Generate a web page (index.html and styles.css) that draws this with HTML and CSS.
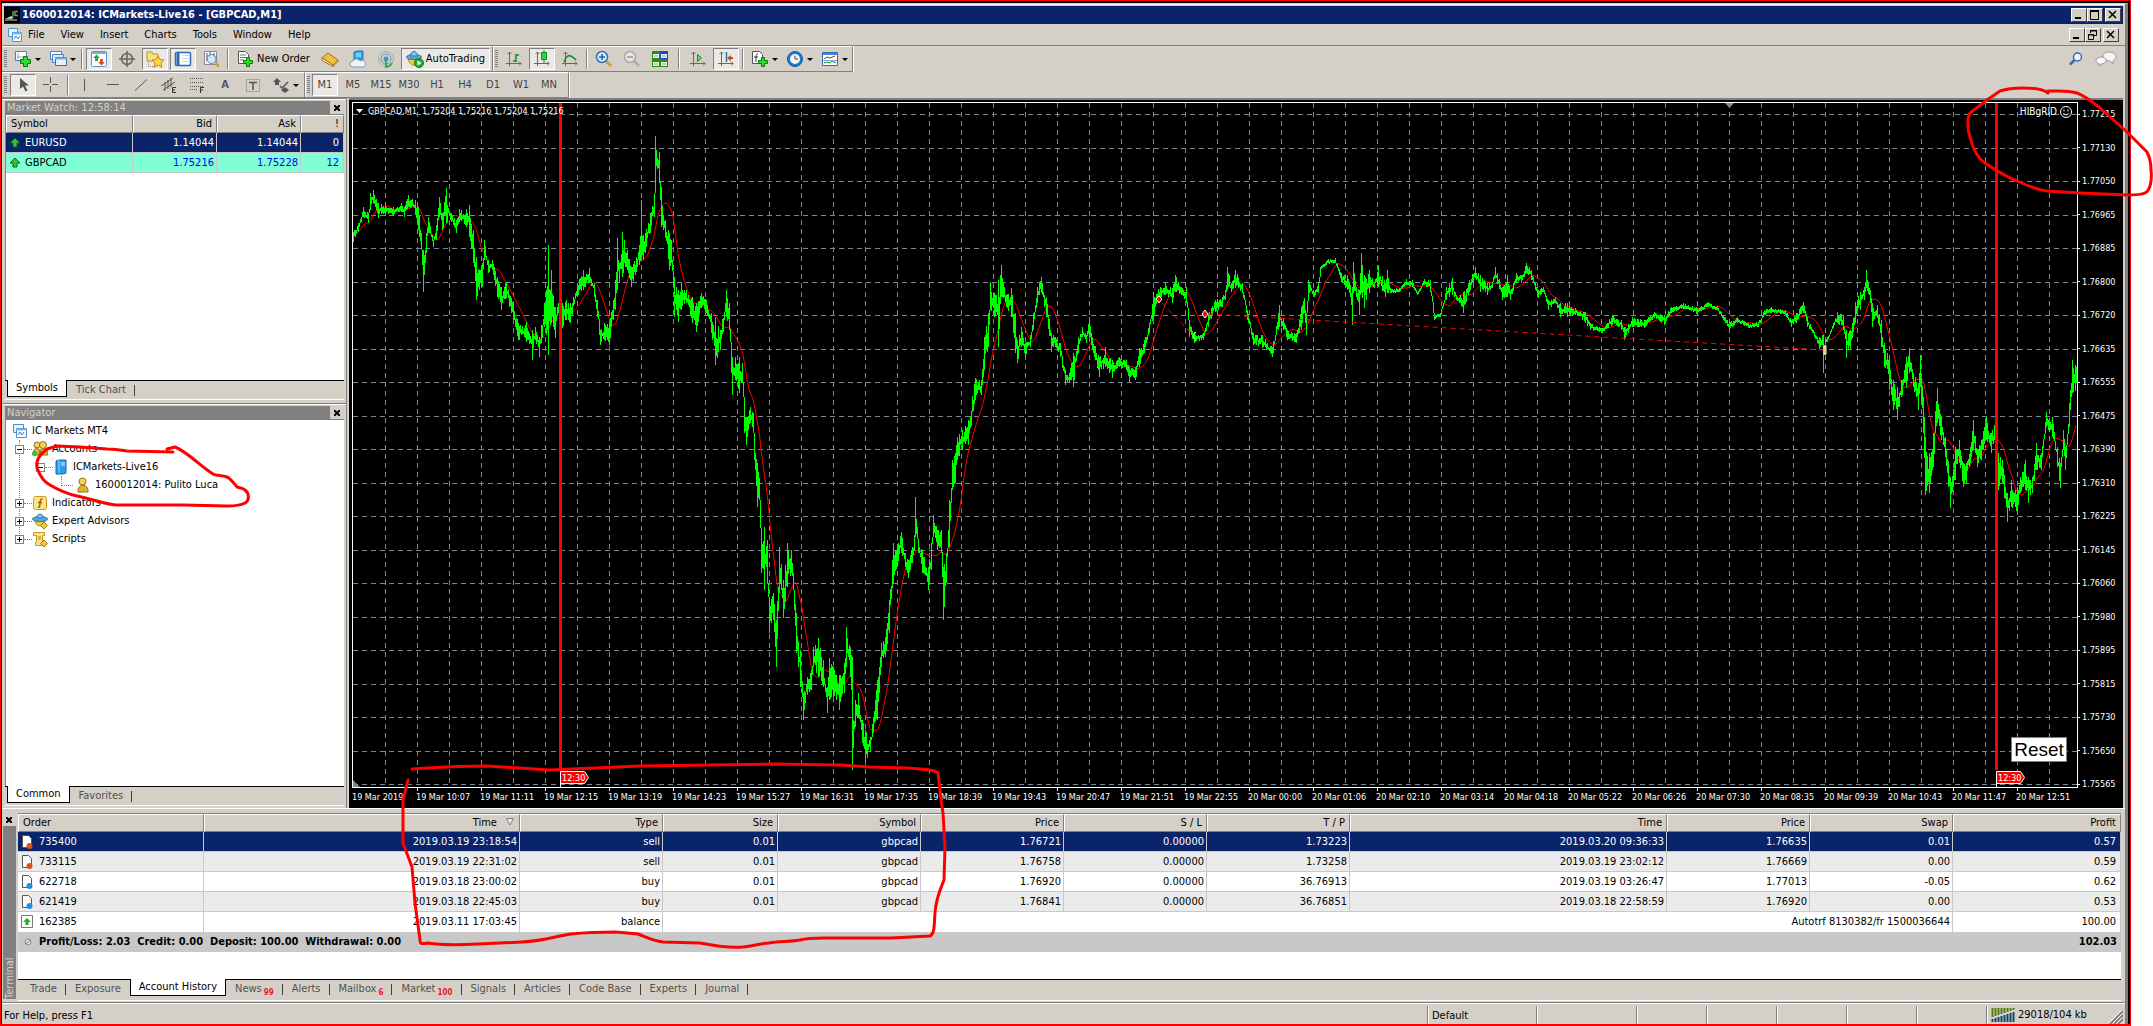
FILE: index.html
```html
<!DOCTYPE html>
<html lang="en">
<head>
    <meta charset="UTF-8">
    <meta name="viewport" content="width=device-width, initial-scale=1.0">
    <title>1600012014: ICMarkets-Live16 - [GBPCAD,M1]</title>
    <link rel="stylesheet" href="styles.css">
</head>
<body>
<div class="desktop">
<div class="window">

    <!-- Title bar -->
    <header class="titlebar">
        <svg class="app-icon" width="16" height="16" viewBox="0 0 16 16"><rect width="16" height="16" fill="#000"/><path d="M1 12l6-3 3 1-2 2z" fill="#b8c8b0"/><path d="M9 4v5M14 4.500h-3v4h3" fill="none" stroke="#6a9a60" stroke-width="1.500"/><path d="M1 13h12" stroke="#ddd"/></svg>
        <h1>1600012014: ICMarkets-Live16 - [GBPCAD,M1]</h1>
        <div class="window-buttons">
            <button type="button" aria-label="Minimize"><svg width="12" height="10"><path d="M2 8h6" stroke="#000" stroke-width="2"/></svg></button>
            <button type="button" aria-label="Maximize"><svg width="12" height="10"><path d="M1.500 1v8.500h8V1" fill="none" stroke="#000"/><path d="M1 1h9" stroke="#000" stroke-width="2"/></svg></button>
            <button type="button" class="close" aria-label="Close"><svg width="12" height="10"><path d="M2 1l7 7M9 1l-7 7" stroke="#000" stroke-width="1.500"/></svg></button>
        </div>
    </header>

    <!-- Menu -->
    <nav class="menubar">
        <svg width="16" height="16" viewBox="0 0 16 16"><path d="M1.500 1.500h9v8h-9z" fill="#e8f4ff" stroke="#4a90d0"/><path d="M5.500 5.500h9v9h-9z" fill="#fff" stroke="#4a90d0"/><path d="M5 6.500h10" stroke="#7ab4e8" stroke-width="2"/><path d="M7 12l2-3 2 3 2-3" fill="none" stroke="#3a80c0"/></svg>
        <button type="button">File</button>
        <button type="button">View</button>
        <button type="button">Insert</button>
        <button type="button">Charts</button>
        <button type="button">Tools</button>
        <button type="button">Window</button>
        <button type="button">Help</button>
        <div class="window-buttons">
            <button type="button" aria-label="Minimize chart"><svg width="12" height="10"><path d="M2 8h6" stroke="#000" stroke-width="2"/></svg></button>
            <button type="button" aria-label="Restore chart"><svg width="12" height="10"><path d="M3.500 3V.5h6v5H7M1.500 4.500h5v5h-5zM3 1h7M1 5h6" fill="none" stroke="#000"/></svg></button>
            <button type="button" class="close" aria-label="Close chart"><svg width="12" height="10"><path d="M2 1l7 7M9 1l-7 7" stroke="#000" stroke-width="1.500"/></svg></button>
        </div>
    </nav>

    <!-- Standard toolbar -->
    <div class="toolbar-row">
        <div class="toolbar">
            <i class="grip"></i>
            <button type="button" class="tool drop" aria-label="New chart"><svg width="18" height="18" viewBox="0 0 18 18"><path d="M1.500 1.500h11v9h-11z" fill="#fff" stroke="#4a80c0"/><path d="M4 3v6M3 7h8" stroke="#88a8c8"/><path d="M9.500 6.500h4v3h3v4h-3v3h-4v-3h-3v-4h3z" fill="#2edc2e" stroke="#0a7a0a"/></svg></button>
            <button type="button" class="tool drop" aria-label="Profiles"><svg width="18" height="18" viewBox="0 0 18 18"><path d="M1.500 1.500h11v8h-11z" fill="#fff" stroke="#4a80c0"/><path d="M3.500 4.500h11v8h-11z" fill="#dceaf8" stroke="#4a80c0"/><path d="M6.500 7.500h11v8h-11z" fill="#e8f2fc" stroke="#3070b8"/><path d="M6 8.500h12" stroke="#78aee0" stroke-width="2"/></svg></button>
            <i class="sep"></i>
            <button type="button" class="tool on" aria-label="Market Watch"><svg width="18" height="18" viewBox="0 0 18 18"><rect x="1.500" y="1.500" width="15" height="15" rx="1" fill="#fff" stroke="#5a98d8"/><path d="M2 3h14" stroke="#78aee0" stroke-width="2"/><path d="M6.500 4.500l3.500 3.500H8v3H5V8H3z" fill="#20b030"/><path d="M11.500 15.500L8 12h2V9h3v3h2z" fill="#e05020"/></svg></button>
            <button type="button" class="tool" aria-label="Data Window"><svg width="18" height="18" viewBox="0 0 18 18" fill="none" stroke="#666" stroke-width="1.500"><circle cx="9" cy="9" r="5.500"/><path d="M9 1v16M1 9h16"/></svg></button>
            <button type="button" class="tool on" aria-label="Navigator"><svg width="18" height="18" viewBox="0 0 18 18"><path d="M1 2h5l1 2h5v7H1z" fill="#f8e088" stroke="#c09020"/><path d="M2.500 12v4.500H8" fill="none" stroke="#888" stroke-dasharray="1 1"/><path d="M12 6l2 3.500 4 .5-3 3 1 4.500-4-2.500-4 2.500 1-4.500-3-3 4-.5z" fill="#ffd840" stroke="#c08a10"/></svg></button>
            <button type="button" class="tool on" aria-label="Terminal"><svg width="18" height="18" viewBox="0 0 18 18"><rect x="1.500" y="2.500" width="15" height="13" rx="1" fill="#fff" stroke="#2a6cb8" stroke-width="1.500"/><path d="M4 3v12" stroke="#2a6cb8" stroke-width="3"/><path d="M8 5.500h7M8 8.500h7M8 11.500h7" stroke="#d4d8dc"/></svg></button>
            <button type="button" class="tool" aria-label="Strategy Tester"><svg width="18" height="18" viewBox="0 0 18 18"><path d="M2.500 1.500h12v13h-12z" fill="#f8f8f8" stroke="#889"/><path d="M5 3v8M8 2v6M12 3v6" stroke="#556"/><circle cx="9.500" cy="9" r="4.500" fill="#cfe4f8" fill-opacity=".85" stroke="#5080b0"/><path d="M13 12.500l4 4" stroke="#d8a030" stroke-width="2.500"/></svg></button>
            <i class="sep"></i>
            <button type="button" class="tool wide"><svg width="18" height="18" viewBox="0 0 18 18"><path d="M1.500 1.500h7l3 3v9h-10z" fill="#fff" stroke="#555"/><path d="M3 5h6M3 7.500h6M3 10h4" stroke="#777"/><path d="M9.500 7.500h3v3h3v3h-3v3h-3v-3h-3v-3h3z" fill="#2edc2e" stroke="#0a7a0a"/></svg>New Order</button>
            <button type="button" class="tool" aria-label="MetaEditor"><svg width="18" height="18" viewBox="0 0 18 18"><path d="M1 8l6-5 10 7-5 5z" fill="#f0c040" stroke="#a87010"/><path d="M1 8v2.500l11 6V15zM12 16.500l5-5V10l-5 5z" fill="#fff4d0" stroke="#a87010"/></svg></button>
            <button type="button" class="tool" aria-label="Virtual hosting"><svg width="18" height="18" viewBox="0 0 18 18"><path d="M5 2l3-1h6v9H5z" fill="#30a8f0" stroke="#1878c0"/><path d="M7 4h5M7 6h5" stroke="#c8ecff"/><path d="M4 17a3 3 0 0 1 0-6 4 4 0 0 1 7 0 3 3 0 0 1 4 6z" fill="#eef2fa" stroke="#8898b8"/></svg></button>
            <button type="button" class="tool" aria-label="Signals"><svg width="18" height="18" viewBox="0 0 18 18" fill="none"><circle cx="9" cy="9" r="7.500" stroke="#8ab8a8"/><circle cx="9" cy="9" r="5" stroke="#6a9ac0"/><circle cx="9" cy="9" r="2.500" fill="#4a90d0"/><path d="M9 9v8a8 8 0 0 0 6-4" stroke="#3cae4c" stroke-width="2"/></svg></button>
            <button type="button" class="tool wide on"><svg width="18" height="18" viewBox="0 0 18 18"><path d="M2 9c2 8 11 9 13 0z" fill="#f0c840" stroke="#b08818"/><ellipse cx="8" cy="7" rx="7.500" ry="2.500" fill="#58a8d8" stroke="#2f78a8"/><path d="M4.500 6c0-6 7-6 7 0z" fill="#80c4e8" stroke="#2f78a8"/><circle cx="13" cy="13" r="4.500" fill="#20b030" stroke="#0a7a1a"/><path d="M11.500 10.500v5l4-2.500z" fill="#fff"/></svg>AutoTrading</button>
        </div>
        <div class="toolbar">
            <i class="grip"></i>
            <button type="button" class="tool" aria-label="Bar chart"><svg width="18" height="18" viewBox="0 0 18 18"><path d="M4.500 2v14M1 13.500h15M2.500 4l2-2 2 2M14 11.500l2 2-2 2" fill="none" stroke="#666"/><path d="M11 4v8M11 5h3M8 11h3" stroke="#128a22" stroke-width="1.500"/></svg></button>
            <button type="button" class="tool on" aria-label="Candlesticks"><svg width="18" height="18" viewBox="0 0 18 18"><path d="M4.500 2v14M1 13.500h15M2.500 4l2-2 2 2M14 11.500l2 2-2 2" fill="none" stroke="#666"/><path d="M11 0v13" stroke="#128a22"/><path d="M8.500 2.500h5v7h-5z" fill="#30d840" stroke="#128a22"/></svg></button>
            <button type="button" class="tool" aria-label="Line chart"><svg width="18" height="18" viewBox="0 0 18 18"><path d="M4.500 2v14M1 13.500h15M2.500 4l2-2 2 2M14 11.500l2 2-2 2" fill="none" stroke="#666"/><path d="M3 12c3-8 6-8 12-2" fill="none" stroke="#128a22" stroke-width="1.500"/></svg></button>
            <i class="sep"></i>
            <button type="button" class="tool" aria-label="Zoom in"><svg width="18" height="18" viewBox="0 0 18 18"><path d="M11 11l5 5" stroke="#d0a030" stroke-width="3"/><circle cx="7" cy="7" r="5.500" fill="#d8ecfc" stroke="#3070b8" stroke-width="1.500"/><path d="M7 4v6M4 7h6" stroke="#2060b0" stroke-width="1.500"/></svg></button>
            <button type="button" class="tool" aria-label="Zoom out"><svg width="18" height="18" viewBox="0 0 18 18"><path d="M11 11l5 5" stroke="#b0b0b0" stroke-width="3"/><circle cx="7" cy="7" r="5.500" fill="#e4e4e4" stroke="#a8a8a8" stroke-width="1.500"/><path d="M4 7h6" stroke="#999" stroke-width="1.500"/></svg></button>
            <button type="button" class="tool" aria-label="Tile windows"><svg width="18" height="18" viewBox="0 0 18 18"><path d="M1 1h8v8H1zM9 9h8v8H9z" fill="#2f8a10"/><path d="M9 1h8v8H9z" fill="#1a4cb8"/><path d="M1 9h8v8H1z" fill="#2f8a10"/><path d="M2 4h6v4H2zM10 4h6v4h-6zM2 12h6v4H2zM10 12h6v4h-6z" fill="#e8f0e8"/><path d="M3 6h4M11 6h4M3 14h4M11 14h4" stroke="#8aa"/></svg></button>
            <i class="sep wider"></i>
            <button type="button" class="tool" aria-label="Auto scroll"><svg width="18" height="18" viewBox="0 0 18 18"><path d="M4.500 2v14M1 13.500h15M2.500 4l2-2 2 2M14 11.500l2 2-2 2" fill="none" stroke="#666"/><path d="M8.500 4.500v7l4-3.500z" fill="#60e070" stroke="#128a22"/></svg></button>
            <button type="button" class="tool on" aria-label="Chart shift"><svg width="18" height="18" viewBox="0 0 18 18"><path d="M4.500 2v14M1 13.500h15M2.500 4l2-2 2 2M14 11.500l2 2-2 2" fill="none" stroke="#666"/><path d="M9.500 2v10" stroke="#2070b0" stroke-width="1.500"/><path d="M10 8l4-3v2h2v2h-2v2z" fill="#d04818"/></svg></button>
            <i class="sep"></i>
            <button type="button" class="tool drop" aria-label="Indicators"><svg width="18" height="18" viewBox="0 0 18 18"><path d="M1.500 1.500h7l3 3v9h-10z" fill="#fff" stroke="#555"/><path d="M7 4c-2 0-2 1-2 8M3 7h4" stroke="#333" fill="none"/><path d="M10.500 7.500h3v3h3v3h-3v3h-3v-3h-3v-3h3z" fill="#2edc2e" stroke="#0a7a0a"/></svg></button>
            <button type="button" class="tool drop" aria-label="Periods"><svg width="18" height="18" viewBox="0 0 18 18"><circle cx="9" cy="9" r="7.500" fill="#1f78d0" stroke="#1658a0"/><circle cx="9" cy="9" r="5" fill="#f4f8fc"/><path d="M9 5.500V9h3" fill="none" stroke="#444"/></svg></button>
            <button type="button" class="tool drop" aria-label="Templates"><svg width="18" height="18" viewBox="0 0 18 18"><path d="M1.500 2.500h15v13h-15z" fill="#fff" stroke="#3070b8"/><path d="M2 4h14" stroke="#3a88d8" stroke-width="2"/><path d="M3 9l3-2 3 1 5-2" fill="none" stroke="#b02810"/><path d="M3 13l3-1 3 1 2-2 4 2" fill="none" stroke="#20902a"/><path d="M2 10.500h14" stroke="#78aee0"/></svg></button>
        </div>
        <div class="toolbar-end">
            <button type="button" class="tool" aria-label="Search"><svg width="14" height="14" viewBox="0 0 14 14"><circle cx="8.500" cy="5" r="4" fill="#eef4fc" stroke="#3a68b8" stroke-width="1.500"/><path d="M5.500 8L1 12.500" stroke="#3a68b8" stroke-width="2.500"/></svg></button>
            <button type="button" class="tool" aria-label="Chat"><svg width="22" height="16" viewBox="0 0 22 16"><path d="M14 1c4 0 7 2 7 4.500S19 9.500 18 10v3l-3-3c-4 0-7-2-7-4.500S10 1 14 1z" fill="#f4f4f4" stroke="#999"/><path d="M6 6c3 0 5 1.500 5 3.500S9 13 6 13l-2 2v-2.500C2 12 1 11 1 9.500 1 7.500 3 6 6 6z" fill="#fafafa" stroke="#999"/></svg></button>
        </div>
    </div>

    <!-- Line studies and timeframes -->
    <div class="toolbar-row">
        <div class="toolbar studies">
            <i class="grip"></i>
            <button type="button" class="tool on" aria-label="Cursor"><svg width="18" height="18" viewBox="0 0 18 18"><path d="M6 2v11l3-2.500 2.500 5 2-1L11 9.500h4z" fill="#555"/></svg></button>
            <button type="button" class="tool" aria-label="Crosshair"><svg width="18" height="18" viewBox="0 0 18 18"><path d="M8.500 1v6M8.500 10v6M1 8.500h6M10 8.500h6" stroke="#555"/></svg></button>
            <i class="sep"></i>
            <button type="button" class="tool" aria-label="Vertical line"><svg width="18" height="18" viewBox="0 0 18 18"><path d="M8.500 3v12" stroke="#555"/></svg></button>
            <button type="button" class="tool" aria-label="Horizontal line"><svg width="18" height="18" viewBox="0 0 18 18"><path d="M3 8.500h12" stroke="#555"/></svg></button>
            <button type="button" class="tool" aria-label="Trendline"><svg width="18" height="18" viewBox="0 0 18 18"><path d="M3 14.500l12-11" stroke="#555"/></svg></button>
            <button type="button" class="tool" aria-label="Equidistant channel"><svg width="18" height="18" viewBox="0 0 18 18"><path d="M1 10l12-8M3 14l12-8M5 6v9M8 4v9M11 2v9" stroke="#555" fill="none"/><path d="M16 11.500h-3.500v5H16M12.500 14H15" stroke="#333" fill="none"/></svg></button>
            <button type="button" class="tool" aria-label="Fibonacci retracement"><svg width="18" height="18" viewBox="0 0 18 18"><path d="M2 2.500h14M2 6.500h14M2 10.500h14M2 13.500h8" stroke="#555" stroke-dasharray="1 1"/><path d="M16 11.500h-3.500V17M12.500 14H15" stroke="#333" fill="none"/></svg></button>
            <button type="button" class="tool letter" aria-label="Text">A</button>
            <button type="button" class="tool" aria-label="Text label"><svg width="18" height="18" viewBox="0 0 18 18"><path d="M2.500 3.500h13v12h-13z" fill="none" stroke="#777" stroke-dasharray="1 1"/><path d="M5 6.500h8M9 6v8" stroke="#555" stroke-width="1.500"/></svg></button>
            <button type="button" class="tool drop" aria-label="Arrows"><svg width="18" height="18" viewBox="0 0 18 18"><path d="M5 2l4 4H7v3H3V6H1zM13 17l-4-3 4-3 4 3z" fill="#555"/><path d="M8 10l2 2 6-6" fill="none" stroke="#555" stroke-width="1.500"/></svg></button>
        </div>
        <div class="toolbar frames">
            <i class="grip"></i>
            <button type="button" class="tool on">M1</button>
            <button type="button" class="tool">M5</button>
            <button type="button" class="tool">M15</button>
            <button type="button" class="tool">M30</button>
            <button type="button" class="tool">H1</button>
            <button type="button" class="tool">H4</button>
            <button type="button" class="tool">D1</button>
            <button type="button" class="tool">W1</button>
            <button type="button" class="tool">MN</button>
        </div>
    </div>

    <main class="workspace">
        <aside class="sidebar">
            <!-- Market Watch -->
            <section class="panel market">
                <div class="panel-title"><h2>Market Watch: 12:58:14</h2><button type="button" class="x" aria-label="Close Market Watch"><svg width="6" height="6"><path d="M0 0l6 6M6 0L0 6" stroke="#000" stroke-width="2"/></svg></button></div>
                <div class="panel-body">
                    <table class="quotes">
                        <thead><tr><th class="q-symbol">Symbol</th><th>Bid</th><th>Ask</th><th class="q-spread">!</th></tr></thead>
                        <tbody>
                            <tr class="selected"><td><svg width="12" height="12" viewBox="0 0 12 12"><path d="M6 1l5 5H8v4H4V6H1z" fill="#38c040" stroke="#0a6a1a"/></svg>EURUSD</td><td>1.14044</td><td>1.14044</td><td>0</td></tr>
                            <tr class="rising"><td><svg width="12" height="12" viewBox="0 0 12 12"><path d="M6 1l5 5H8v4H4V6H1z" fill="#38c040" stroke="#0a6a1a"/></svg>GBPCAD</td><td>1.75216</td><td>1.75228</td><td>12</td></tr>
                        </tbody>
                    </table>
                </div>
                <div class="tabs"><button type="button" class="active">Symbols</button><button type="button">Tick Chart</button></div>
            </section>

            <!-- Navigator -->
            <section class="panel navigator">
                <div class="panel-title"><h2>Navigator</h2><button type="button" class="x" aria-label="Close Navigator"><svg width="6" height="6"><path d="M0 0l6 6M6 0L0 6" stroke="#000" stroke-width="2"/></svg></button></div>
                <div class="panel-body">
                    <ul class="tree">
                        <li class="root"><svg width="16" height="16" viewBox="0 0 16 16"><path d="M1.500 1.500h10v8h-10z" fill="#e8f4ff" stroke="#4a90d0"/><path d="M4.500 5.500h10v9h-10z" fill="#fff" stroke="#4a90d0"/><path d="M4 6.500h11" stroke="#7ab4e8" stroke-width="2"/><path d="M6 12l2-3 2 3 2-3" fill="none" stroke="#3a80c0"/></svg>IC Markets MT4</li>
                        <li class="level-1"><button type="button" class="minus" aria-label="Collapse Accounts"></button><i class="stem"></i><svg width="16" height="16" viewBox="0 0 16 16"><path d="M1 14c0-9 8-9 8 0zM7 14c0-9 9-9 9 0z" fill="#e0b030" stroke="#9a7010"/><circle cx="5" cy="4" r="3" fill="#f4d060" stroke="#9a7010"/><circle cx="11" cy="4" r="3.500" fill="#f4d060" stroke="#9a7010"/><circle cx="2.500" cy="12.500" r="2.500" fill="#30c040"/></svg>Accounts</li>
                        <li class="level-2"><button type="button" class="minus" aria-label="Collapse ICMarkets-Live16"></button><i class="stem"></i><svg width="16" height="16" viewBox="0 0 16 16"><path d="M3 2l3-1h7v13l-3 1H3z" fill="#28a0f0" stroke="#1468b0"/><path d="M6 1v13" stroke="#90d4ff"/><path d="M8 4h4M8 6h4" stroke="#e0f4ff"/></svg>ICMarkets-Live16</li>
                        <li class="level-3"><i class="stem"></i><svg width="16" height="16" viewBox="0 0 16 16"><path d="M3 15c-1-9 11-9 10 0z" fill="#e0b030" stroke="#9a7010"/><circle cx="7.500" cy="4.500" r="3.500" fill="#f4d060" stroke="#9a7010"/></svg>1600012014: Pulito Luca</li>
                        <li class="level-1"><button type="button" class="plus" aria-label="Expand Indicators"></button><i class="stem"></i><svg width="16" height="16" viewBox="0 0 16 16"><rect x="1.500" y="1.500" width="13" height="13" rx="2" fill="#fbe38a" stroke="#c89a20"/><path d="M10.500 4C8 3.500 8.500 6 7.500 12H6M6 7.500h4" fill="none" stroke="#9a6a00" stroke-width="1.500"/></svg>Indicators</li>
                        <li class="level-1"><button type="button" class="plus" aria-label="Expand Expert Advisors"></button><i class="stem"></i><svg width="16" height="16" viewBox="0 0 16 16"><path d="M3 8c1 6 8 7 10 0z" fill="#f0c840" stroke="#b08818"/><ellipse cx="8" cy="6" rx="7.500" ry="2.500" fill="#58a8d8" stroke="#2f78a8"/><path d="M4.500 5c0-5 7-5 7 0z" fill="#80c4e8" stroke="#2f78a8"/><path d="M12 9l3.500 3.500L12 16l-3.500-3.500z" fill="#f0c840" stroke="#a87818"/></svg>Expert Advisors</li>
                        <li class="level-1 last"><button type="button" class="plus" aria-label="Expand Scripts"></button><i class="stem"></i><svg width="16" height="16" viewBox="0 0 16 16"><path d="M1.500 1.500h11v3h-2v7h2v3h-9v-3h1v-7h-3z" fill="#fbe38a" stroke="#c89a20"/><path d="M6 6h3M6 8h3" stroke="#b08818"/><path d="M12 9l3.500 3.500L12 16l-3.500-3.500z" fill="#f0c840" stroke="#a87818"/></svg>Scripts</li>
                    </ul>
                </div>
                <div class="tabs"><button type="button" class="active">Common</button><button type="button">Favorites</button></div>
            </section>
        </aside>

        <!-- Chart -->
        <section class="chart">
            <div class="plot">
                <svg id="plot" viewBox="353 103 1724 684" preserveAspectRatio="none"></svg>
                <p class="chart-label"><svg width="7" height="4"><path d="M0 0h7L3.500 4z" fill="#fff"/></svg>GBPCAD,M1 &nbsp;1.75204 1.75216 1.75204 1.75216</p>
                <p class="expert-label">HIBgRID<svg width="12" height="12" viewBox="0 0 12 12" fill="none" stroke="#fff"><circle cx="6" cy="6" r="5.500"/><path d="M3.500 7c1 2.500 4 2.500 5 0M4 3.500v2M8 3.500v2"/></svg></p>
                <button type="button" class="reset">Reset</button>
            </div>
            <div class="price-axis">
                <span>1.77215</span><span>1.77130</span><span>1.77050</span><span>1.76965</span><span>1.76885</span><span>1.76800</span><span>1.76720</span>
                <span>1.76635</span><span>1.76555</span><span>1.76475</span><span>1.76390</span><span>1.76310</span><span>1.76225</span><span>1.76145</span>
                <span>1.76060</span><span>1.75980</span><span>1.75895</span><span>1.75815</span><span>1.75730</span><span>1.75650</span><span>1.75565</span>
            </div>
            <div class="time-axis">
                <span>19 Mar 2019</span><span>19 Mar 10:07</span><span>19 Mar 11:11</span><span>19 Mar 12:15</span><span>19 Mar 13:19</span><span>19 Mar 14:23</span><span>19 Mar 15:27</span>
                <span>19 Mar 16:31</span><span>19 Mar 17:35</span><span>19 Mar 18:39</span><span>19 Mar 19:43</span><span>19 Mar 20:47</span><span>19 Mar 21:51</span><span>19 Mar 22:55</span>
                <span>20 Mar 00:00</span><span>20 Mar 01:06</span><span>20 Mar 02:10</span><span>20 Mar 03:14</span><span>20 Mar 04:18</span><span>20 Mar 05:22</span><span>20 Mar 06:26</span>
                <span>20 Mar 07:30</span><span>20 Mar 08:35</span><span>20 Mar 09:39</span><span>20 Mar 10:43</span><span>20 Mar 11:47</span><span>20 Mar 12:51</span>
            </div>
        </section>
    </main>

    <!-- Terminal -->
    <section class="terminal">
        <div class="terminal-side">
            <button type="button" class="x" aria-label="Close Terminal"><svg width="6" height="6"><path d="M0 0l6 6M6 0L0 6" stroke="#000" stroke-width="2"/></svg></button>
            <h2>Terminal</h2>
        </div>
        <div class="terminal-main">
            <div class="history-wrap">
                <table class="history">
                    <colgroup><col class="c-order"><col class="c-open"><col class="c-type"><col class="c-size"><col class="c-price"><col class="c-price"><col class="c-price"><col class="c-price"><col><col class="c-price"><col class="c-price"><col class="c-profit"></colgroup>
                    <thead>
                        <tr><th>Order</th><th>Time <svg class="sort" width="9" height="8"><path d="M.5.500h7L4 7z" fill="#e8e8e8" stroke="#808080"/></svg></th><th>Type</th><th>Size</th><th>Symbol</th><th>Price</th><th>S / L</th><th>T / P</th><th>Time</th><th>Price</th><th>Swap</th><th>Profit</th></tr>
                    </thead>
                    <tbody>
                        <tr class="selected"><td><svg width="12" height="16" viewBox="0 0 12 16"><path d="M1.500 1.500h6l3 3v9h-9z" fill="#fff" stroke="#555"/><circle cx="8.500" cy="12" r="3" fill="#e05018"/></svg>735400</td><td>2019.03.19 23:18:54</td><td>sell</td><td>0.01</td><td>gbpcad</td><td>1.76721</td><td>0.00000</td><td>1.73223</td><td>2019.03.20 09:36:33</td><td>1.76635</td><td>0.01</td><td>0.57</td></tr>
                        <tr class="odd"><td><svg width="12" height="16" viewBox="0 0 12 16"><path d="M1.500 1.500h6l3 3v9h-9z" fill="#fff" stroke="#555"/><circle cx="8.500" cy="12" r="3" fill="#e05018"/></svg>733115</td><td>2019.03.19 22:31:02</td><td>sell</td><td>0.01</td><td>gbpcad</td><td>1.76758</td><td>0.00000</td><td>1.73258</td><td>2019.03.19 23:02:12</td><td>1.76669</td><td>0.00</td><td>0.59</td></tr>
                        <tr><td><svg width="12" height="16" viewBox="0 0 12 16"><path d="M1.500 1.500h6l3 3v9h-9z" fill="#fff" stroke="#555"/><circle cx="8.500" cy="12" r="3" fill="#2090e0"/></svg>622718</td><td>2019.03.18 23:00:02</td><td>buy</td><td>0.01</td><td>gbpcad</td><td>1.76920</td><td>0.00000</td><td>36.76913</td><td>2019.03.19 03:26:47</td><td>1.77013</td><td>-0.05</td><td>0.62</td></tr>
                        <tr class="odd"><td><svg width="12" height="16" viewBox="0 0 12 16"><path d="M1.500 1.500h6l3 3v9h-9z" fill="#fff" stroke="#555"/><circle cx="8.500" cy="12" r="3" fill="#2090e0"/></svg>621419</td><td>2019.03.18 22:45:03</td><td>buy</td><td>0.01</td><td>gbpcad</td><td>1.76841</td><td>0.00000</td><td>36.76851</td><td>2019.03.18 22:58:59</td><td>1.76920</td><td>0.00</td><td>0.53</td></tr>
                        <tr class="balance"><td><svg width="12" height="16" viewBox="0 0 12 16"><path d="M.5 1.500h11v12H.5z" fill="#fff" stroke="#777"/><path d="M6 4l4 4H7.500v3h-3V8H2z" fill="#20b030"/></svg>162385</td><td>2019.03.11 17:03:45</td><td>balance</td><td colspan="8">Autotrf 8130382/fr 1500036644</td><td>100.00</td></tr>
                        <tr class="total"><td colspan="11"><svg width="12" height="12" viewBox="0 0 12 12"><circle cx="7" cy="6" r="3" fill="#ddd" stroke="#888"/><path d="M5 8l4-4" stroke="#888"/></svg>Profit/Loss: 2.03&nbsp; Credit: 0.00&nbsp; Deposit: 100.00&nbsp; Withdrawal: 0.00</td><td>102.03</td></tr>
                    </tbody>
                </table>
            </div>
            <div class="tabs">
                <button type="button">Trade</button><button type="button">Exposure</button><button type="button" class="active">Account History</button><button type="button">News<sub>99</sub></button><button type="button">Alerts</button><button type="button">Mailbox<sub>6</sub></button><button type="button">Market<sub>100</sub></button><button type="button">Signals</button><button type="button">Articles</button><button type="button">Code Base</button><button type="button">Experts</button><button type="button">Journal</button>
            </div>
        </div>
    </section>

    <footer class="statusbar">
        <span class="help">For Help, press F1</span>
        <span class="profile">Default</span>
        <span class="cell bar-time"></span>
        <span class="cell"></span>
        <span class="cell"></span>
        <span class="cell"></span>
        <span class="cell"></span>
        <span class="cell"></span>
        <span class="traffic"><svg width="24" height="14" viewBox="0 0 24 14"><path d="M1.500 0v9M4.500 0v8M7.500 0v7M10.500 0v6M13.500 0v5M16.500 0v4M19.500 0v3M22.500 0v2" stroke="#5a7a10" stroke-width="2"/><path d="M1.500 11v3M4.500 10v4M7.500 9v5M10.500 8v6M13.500 7v7M16.500 6v8M19.500 5v9M22.500 4v10" stroke="#104868" stroke-width="2"/></svg>29018/104 kb</span>
        <svg class="resize" width="14" height="14"><path d="M1 14L14 1M5 14l9-9M9 14l5-5" stroke="#808080" stroke-width="2"/><path d="M0 13L13 0M4 13l9-9M8 13l5-5" stroke="#fff"/></svg>
    </footer>
</div>
</div>

<!-- Pen marks over the windows -->
<svg class="marks" viewBox="0 0 2153 1026" preserveAspectRatio="none">
    <path d="M173 452L127 451C118 450 113 449 107 449L80 447 57 446 47 449C38 456 36 461 37 468 40 476 44 482 50 485 60 491 68 494 77 496 92 499 108 505 117 505L183 505 227 506C236 506 241 505 245 503 250 500 249 493 245 490 243 488 240 488 237 487 232 481 230 478 227 477 222 475 216 476 213 474 200 466 189 453 175 447L167 449"/>
    <path d="M2048 93C2043 89 2030 88 2023 88 2014 88 2006 89 2000 91L1987 100 1970 113C1967 117 1967 128 1970 137 1973 150 1979 159 1985 163 1997 171 2007 177 2017 181 2030 187 2038 190 2047 191L2080 193 2127 195C2136 195 2141 195 2145 193 2151 190 2152 178 2151 170 2151 162 2149 156 2147 152L2127 132 2100 108C2090 100 2083 95 2077 93 2068 90 2058 91 2048 91"/>
    <path d="M408 780L403 800 403 843 412 867 415 903 420 940C420 944 421 944 428 943 440 945 460 945 478 944L522 942C545 941 556 936 571 934 590 932 600 932 616 932L638 934C648 938 653 941 663 942L700 943C715 946 730 948 743 947 757 946 760 943 769 943 780 941 788 942 800 940 808 938 815 938 824 938L891 938 930 936C935 933 934 925 935 913 936 898 940 890 944 880L945 847 943 813 941 800 938 773C936 770 924 769 907 768L870 767 840 765 773 764 640 766 549 770 487 766C455 766 430 768 412 769"/>
</svg>
<script src="chart.js"></script>
</body>
</html>
```
FILE: styles.css
```css
body {
    margin: 0;
    position: relative;
    height: 100vh;
    overflow: hidden;
    background: #fff;
    font: 11px/14px "DejaVu Sans Condensed", "DejaVu Sans", sans-serif;
    color: #000;
}
h1, h2, p, ul {
    margin: 0;
    padding: 0;
    font-size: 11px;
    font-weight: normal;
}
button {
    font: inherit;
    color: inherit;
    margin: 0;
    padding: 0;
    border: 0;
    background: none;
}
svg {
    display: block;
    flex: none;
}
.desktop {
    box-sizing: border-box;
    height: 100vh;
    margin-right: 22px;
    padding: 2px 2px 0 1px;
    border: 1px solid #f00;
    border-bottom-width: 2px;
    background: #000;
}
.window {
    box-sizing: border-box;
    height: 100%;
    display: flex;
    flex-direction: column;
    background: #d4d0c8;
    border-top: 1px solid #d4d0c8;
    border-right: 3px solid #808080;
    box-shadow: inset 0 1px #fff;
}

/* title and menu */
.titlebar {
    display: flex;
    align-items: center;
    height: 18px;
    margin: 2px 2px 0;
    background: #0a246a;
    color: #fff;
}
.titlebar h1 {
    margin-left: 2px;
    flex: 1;
    font-weight: bold;
}
.window-buttons {
    display: flex;
    margin-left: auto;
    margin-right: 2px;
}
.window-buttons button {
    box-sizing: border-box;
    width: 16px;
    height: 14px;
    padding: 1px;
    background: #d4d0c8;
    border: 1px solid;
    border-color: #fff #404040 #404040 #fff;
}
.window-buttons .close {
    margin-left: 2px;
}
.menubar {
    display: flex;
    align-items: center;
    gap: 16px;
    height: 21px;
    padding: 0 4px 0 5px;
    border-bottom: 1px solid #808080;
}
.menubar > svg {
    margin-right: -11px;
}

/* toolbars */
.toolbar-row {
    display: flex;
    height: 26px;
}
.toolbar {
    box-sizing: border-box;
    display: flex;
    align-items: center;
    gap: 2px;
    height: 26px;
    padding: 0 2px;
    border-top: 1px solid #fff;
    border-right: 1px solid #808080;
    border-bottom: 1px solid #808080;
    box-shadow: 1px 0 #fff;
}
.grip {
    width: 3px;
    height: 18px;
    margin-right: 1px;
    background: repeating-linear-gradient(#808080 0 1px, #d4d0c8 1px 2px);
}
.sep {
    width: 1px;
    height: 20px;
    margin: 0 1px;
    background: #808080;
    border-right: 1px solid #fff;
}
.sep.wider {
    margin: 0 3px;
}
.tool {
    box-sizing: border-box;
    display: flex;
    align-items: center;
    justify-content: center;
    width: 26px;
    height: 22px;
    border: 1px solid transparent;
}
.tool.on {
    background: #ebe9e5;
    border-color: #808080 #fff #fff #808080;
}
.tool.wide {
    width: auto;
    gap: 2px;
    padding: 0 4px;
}
.tool.drop {
    width: 33px;
    justify-content: flex-start;
    padding-left: 3px;
}
.tool.drop::after {
    content: "";
    margin-left: 3px;
    border: 3px solid transparent;
    border-top-color: #000;
    border-bottom: 0;
}
.tool.letter {
    font-weight: bold;
    color: #555;
}
.studies {
    padding-right: 3px;
}
.frames {
    color: #444;
    padding-right: 6px;
}
.frames .grip {
    margin-right: 0;
}
.toolbar-end {
    display: flex;
    align-items: center;
    gap: 4px;
    margin-left: auto;
    padding-right: 6px;
}

/* workspace */
.workspace {
    flex: 1;
    min-height: 0;
    display: flex;
}
.sidebar {
    width: 345px;
    display: flex;
    flex-direction: column;
}
.panel {
    box-sizing: border-box;
    display: flex;
    flex-direction: column;
    padding: 2px 2px 3px 3px;
    border-top: 1px solid #808080;
    border-right: 1px solid #808080;
    box-shadow: inset 0 1px #fff;
}
.market {
    height: 305px;
}
.navigator {
    flex: 1;
    padding-bottom: 2px;
}
.panel-title {
    display: flex;
    height: 13px;
}
.panel-title h2 {
    flex: 1;
    padding-left: 2px;
    line-height: 13px;
    background: #808080;
    color: #d4d0c8;
}
.x {
    display: flex;
    align-items: center;
    justify-content: center;
    width: 14px;
    height: 13px;
}
.panel-body {
    flex: 1;
    background: #fff;
    border-top: 1px solid #808080;
    border-left: 1px solid #808080;
}
table {
    border-collapse: separate;
    border-spacing: 0;
    table-layout: fixed;
    width: 100%;
}
th {
    height: 16px;
    padding: 0 4px;
    font-weight: normal;
    text-align: right;
    background: #d4d0c8;
    border: 1px solid;
    border-color: #fff #808080 #808080 #fff;
}
td {
    height: 19px;
    padding: 0 2px;
    text-align: right;
    white-space: nowrap;
    border-right: 1px solid #c8c8c8;
    border-bottom: 1px solid #c8c8c8;
}
th:first-child,
td:first-child {
    text-align: left;
}
td svg {
    display: inline-block;
    vertical-align: middle;
}
.quotes .q-symbol {
    width: 117px;
}
.quotes .q-spread {
    width: 33px;
}
.quotes td:first-child {
    padding-left: 3px;
}
.quotes td svg {
    margin-right: 4px;
}
.quotes td:last-child {
    padding-right: 4px;
}
.selected {
    background: #0a246a;
    color: #fff;
}
.rising {
    background: #7fffd4;
}
.rising td:not(:first-child) {
    color: #00f;
}
.tabs {
    display: flex;
    height: 18px;
    border-top: 1px solid #000;
    border-bottom: 1px solid #fff;
    color: #505050;
}
.tabs button {
    position: relative;
    height: 17px;
    padding: 0 9px;
}
.tabs button:not(.active)::after {
    content: "";
    position: absolute;
    right: 0;
    top: 4px;
    height: 11px;
    border-right: 1px solid #404040;
}
.tabs .active {
    margin: -1px 0 0 2px;
    padding: 0 8px;
    background: #fff;
    color: #000;
    border: 1px solid #000;
    border-top: 0;
}
.tabs button:has(+ .active)::after {
    display: none;
}
.tabs sub {
    margin-left: 2px;
    font-size: 8px;
    font-weight: bold;
    line-height: 1px;
    vertical-align: -3px;
    color: #e81c24;
}

/* navigator tree */
.tree {
    position: relative;
    padding-top: 2px;
    list-style: none;
}
.tree::before {
    content: "";
    position: absolute;
    left: 13px;
    top: 20px;
    height: 96px;
    border-left: 1px dotted #808080;
}
.tree li {
    display: flex;
    align-items: center;
    height: 18px;
}
.tree svg {
    margin-right: 4px;
}
.tree .root {
    padding-left: 6px;
}
.tree .level-1 {
    padding-left: 9px;
}
.tree .level-2 {
    padding-left: 30px;
}
.tree .level-3 {
    padding-left: 55px;
}
.tree button {
    position: relative;
    box-sizing: border-box;
    width: 9px;
    height: 9px;
    background: #fff;
    border: 1px solid #808080;
}
.tree button::before,
.tree .plus::after {
    content: "";
    position: absolute;
    left: 1px;
    top: 3px;
    width: 5px;
    height: 1px;
    background: #000;
}
.tree .plus::after {
    left: 3px;
    top: 1px;
    width: 1px;
    height: 5px;
}
.stem {
    width: 8px;
    border-top: 1px dotted #808080;
}
.level-3 .stem {
    width: 11px;
    height: 9px;
    margin-right: 2px;
    margin-bottom: 8px;
    border-top: 0;
    border-left: 1px dotted #808080;
    border-bottom: 1px dotted #808080;
}

/* chart */
.chart {
    box-sizing: border-box;
    flex: 1;
    min-width: 0;
    display: grid;
    grid-template-columns: 1fr 45px;
    grid-template-rows: 1fr 20px;
    margin: 0 2px 0 2px;
    padding: 2px 0 0 3px;
    background: #000;
    border-top: 2px solid #808080;
    color: #fff;
    font-size: 9px;
    line-height: 12px;
}
.plot {
    position: relative;
    min-width: 0;
    min-height: 0;
    border: 1px solid #fff;
}
#plot {
    position: absolute;
    width: 100%;
    height: 100%;
}
.chart-label,
.expert-label {
    position: absolute;
    top: 2px;
    display: flex;
    align-items: center;
    gap: 5px;
    font-size: 9px;
}
.chart-label {
    left: 3px;
}
.expert-label {
    right: 5px;
    top: 3px;
    gap: 3px;
    font-size: 10px;
}
.reset {
    position: absolute;
    right: 10px;
    bottom: 25px;
    width: 56px;
    height: 25px;
    background: #fff;
    border: 1px solid #808080;
    color: #000;
    font: 19px/23px "Liberation Sans", Arial, sans-serif;
}
.price-axis {
    grid-row: 1 / 3;
    grid-column: 2;
    display: flex;
    flex-direction: column;
    justify-content: space-between;
    padding: 6px 0 18px;
}
.price-axis span {
    display: flex;
    align-items: center;
    gap: 2px;
    height: 12px;
}
.price-axis span::before {
    content: "";
    width: 2px;
    height: 1px;
    background: #fff;
}
.time-axis {
    display: flex;
    min-width: 0;
}
.time-axis span {
    position: relative;
    flex: 0 0 64px;
    padding-top: 3px;
    white-space: nowrap;
}
.time-axis span + span::before {
    content: "";
    position: absolute;
    left: 1px;
    top: 0;
    height: 3px;
    border-left: 1px solid #fff;
}
.grid {
    fill: none;
    stroke: #778899;
    stroke-dasharray: 5 4;
}
.bars {
    fill: none;
    stroke: #0f0;
}
.average {
    fill: none;
    stroke: #f00;
}
.trade {
    fill: none;
    stroke: #f00;
    stroke-dasharray: 5 4;
}
.session {
    fill: #f00;
}
.flag {
    fill: #f00;
    stroke: #fff;
}
.flag-text {
    fill: #fff;
    font-size: 9px;
}

/* terminal */
.terminal {
    display: flex;
    height: 188px;
    padding: 4px 4px 0 0;
    border-top: 1px solid #fff;
}
.terminal-side {
    display: flex;
    flex-direction: column;
    width: 15px;
    margin-right: 1px;
}
.terminal-side h2 {
    flex: 1;
    width: 13px;
    margin: 0 1px 2px;
    line-height: 13px;
    background: #808080;
    color: #d4d0c8;
    writing-mode: vertical-rl;
    transform: rotate(180deg);
}
.terminal-main {
    flex: 1;
    min-width: 0;
    display: flex;
    flex-direction: column;
    border-top: 1px solid #808080;
}
.history-wrap {
    flex: 1;
    background: #fff;
}
.c-order { width: 186px; }
.c-open { width: 316px; }
.c-type { width: 143px; }
.c-size { width: 115px; }
.c-price { width: 143px; }
.c-profit { width: 168px; }
.history td:first-child {
    padding-left: 3px;
}
.history td svg {
    margin-right: 6px;
}
.history td:last-child {
    padding-right: 4px;
}
.history .sort {
    display: inline-block;
    margin-left: 6px;
}
.odd {
    background: #ebebeb;
}
.balance td {
    border-bottom: 0;
    height: 20px;
}
.total {
    background: #c8c8c8;
    font-weight: bold;
}
.total td {
    border: 0;
    height: 20px;
}
.terminal .tabs {
    height: 20px;
    padding-left: 3px;
}
.terminal .tabs .active {
    margin-left: 0;
}

/* status bar */
.statusbar {
    display: flex;
    align-items: stretch;
    height: 18px;
    margin-top: 1px;
    padding-top: 3px;
    line-height: 20px;
    border-top: 1px solid #808080;
    box-shadow: inset 0 1px #fff;
}
.statusbar span {
    padding-left: 4px;
}
.statusbar .help {
    flex: 1;
    padding-left: 2px;
}
.profile,
.cell,
.traffic {
    box-sizing: border-box;
    width: 70px;
    border-left: 1px solid #808080;
    box-shadow: inset 1px 0 #fff;
}
.profile {
    width: 109px;
}
.bar-time {
    width: 100px;
}
.traffic {
    display: flex;
    align-items: center;
    gap: 3px;
    width: 123px;
}
.resize {
    align-self: flex-end;
    margin-right: 2px;
}
.marks {
    position: absolute;
    left: 0;
    top: 0;
    width: 100%;
    height: 100%;
    pointer-events: none;
    fill: none;
    stroke: #f00;
    stroke-width: 3px;
    stroke-linejoin: round;
    stroke-linecap: round;
}
```
FILE: chart.js
```javascript
// minute, high, low
const quotes = `353,232,242 358,223,232 363,207,217 368,213,223 370,193,210 373,190,203 378,203,218 385,205,213 393,207,216 401,203,212
404,207,217 408,195,207 415,200,215 418,207,230 421,233,250 423,250,292 426,233,253 428,217,233 433,240,247 436,225,240
439,197,217 442,213,230 446,188,223 451,213,222 456,220,233 459,209,222 466,209,227 469,205,237 473,230,263 476,257,300
479,270,290 482,263,287 484,240,260 488,260,273 492,260,270 497,277,297 501,287,310 506,282,298 513,303,320 518,323,340
526,322,342 532,330,360 535,327,340 539,337,357 544,303,327 546,290,335 548,245,355 551,270,323 555,307,338 558,303,313 562,303,328
566,300,320 570,303,323 577,283,297 583,270,290 589,268,283 594,283,297 597,300,317 600,330,345 604,323,340 609,323,345
613,300,320 615,280,310 617,238,290 619,263,283 622,232,277 627,250,270 631,267,287 636,257,272 639,245,265 641,200,257 643,235,260 645,233,253 650,213,233
654,193,217 655,136,183 659,152,183 661,187,227 665,220,238 669,233,270 671,240,263 674,277,317 678,290,322 681,283,310
686,290,303 692,297,323 696,303,332 701,293,308 706,300,313 711,313,333 715,317,365 720,330,350 726,290,317 729,303,330
732,357,395 735,357,380 739,357,393 742,363,383 744,403,433 746,417,445 750,407,423 753,413,433 754,436,460 757,463,507
759,478,500 761,537,573 764,527,590 767,540,583 769,603,633 773,593,620 776,620,667 779,547,593 783,580,618 787,543,587
791,550,573 793,573,590 796,613,653 800,650,687 803,693,720 807,677,695 811,670,690 813,647,667 818,638,677 823,660,687
827,687,713 829,658,700 833,667,697 839,675,710 844,663,693 846,627,667 850,647,677 851,655,690 852,657,770 853,720,748 855,700,727 858,693,717
862,720,743 865,730,763 870,737,752 873,717,733 877,680,720 881,643,667 885,637,657 889,600,633 893,543,583 897,547,567
901,532,553 905,553,567 908,560,578 912,547,563 914,535,550 915,497,537 918,540,553 922,550,573 928,567,590 931,543,570 933,515,537
937,530,550 941,530,553 943,567,620 946,553,583 949,500,547 952,460,490 955,453,483 957,437,460 962,430,450 968,420,445
975,378,400 981,380,395 984,337,370 988,313,347 990,282,310 994,293,317 998,280,347 1001,265,297 1006,295,307 1011,288,317
1015,313,353 1017,340,363 1021,327,347 1025,343,357 1030,335,347 1033,313,330 1037,287,303 1041,277,293 1046,297,317 1051,333,352
1055,337,347 1060,343,357 1065,370,385 1069,373,383 1073,353,387 1078,337,353 1082,327,337 1086,335,343 1089,317,337 1092,337,350
1099,357,377 1105,347,367 1112,360,378 1119,357,367 1126,360,370 1129,367,382 1135,367,380 1139,348,367 1144,340,353 1149,323,333
1153,292,320 1160,287,300 1165,282,295 1172,288,303 1175,275,292 1181,287,295 1186,287,303 1189,323,337 1194,332,343 1203,333,340
1208,313,327 1215,300,312 1222,297,307 1225,290,300 1227,267,290 1231,283,292 1235,270,288 1242,283,293 1247,310,320 1253,333,345 1262,335,348
1272,347,357 1279,305,327 1283,318,330 1287,330,340 1296,333,343 1301,307,330 1304,298,313 1306,313,335 1308,280,293 1314,292,297
1318,283,293 1320,267,270 1328,259,263 1335,258,263 1341,273,282 1347,275,290 1350,285,297 1352,287,325 1353,262,293 1356,287,297 1359,290,315 1361,253,293
1364,275,308 1369,270,293 1374,282,288 1378,265,287 1385,283,297 1387,270,293 1390,288,293 1399,288,292 1406,279,285 1412,280,287
1417,292,295 1424,279,285 1430,280,292 1434,315,320 1440,313,317 1446,287,300 1452,278,295 1456,295,300 1463,292,313 1469,280,292
1475,267,278 1480,275,292 1487,283,295 1492,282,288 1495,267,278 1502,287,300 1507,275,297 1510,290,300 1516,273,283 1521,275,283
1526,263,273 1531,270,280 1538,290,298 1543,287,292 1548,300,310 1555,297,303 1560,303,317 1567,303,317 1575,308,315 1585,312,323
1590,323,330 1602,328,333 1612,315,325 1621,320,330 1624,327,340 1632,317,327 1644,320,328 1654,312,318 1664,315,325 1671,307,313
1683,303,309 1696,307,314 1708,302,307 1717,306,310 1723,315,320 1729,322,330 1737,317,323 1748,323,328 1758,322,327 1764,310,315
1771,307,313 1785,310,315 1791,320,327 1796,313,323 1803,302,313 1807,317,327 1814,332,337 1819,337,349 1822,335,345 1823,335,373 1825,338,345 1827,337,342
1833,323,328 1837,312,323 1843,315,330 1846,330,358 1850,330,350 1855,302,323 1860,292,310 1864,287,300 1866,270,288 1870,290,303
1872,303,327 1877,305,318 1881,320,347 1884,343,367 1889,360,390 1893,380,410 1897,387,420 1901,380,397 1906,357,387 1909,348,373
1913,373,387 1918,383,410 1920,355,387 1923,397,433 1925,437,495 1929,453,493 1933,433,467 1937,388,423 1941,417,440 1945,437,457
1950,477,508 1955,447,480 1959,440,463 1963,463,487 1966,463,483 1970,447,463 1973,420,450 1977,450,467 1981,440,460 1986,417,440
1991,433,453 1996,417,437 1998,453,490 2002,460,483 2007,493,522 2011,480,507 2017,487,515 2020,477,493 2025,460,490 2028,477,503
2032,477,493 2036,443,470 2041,453,470 2046,412,427 2052,417,437 2057,447,467 2060,463,488 2063,430,450 2065,447,470 2069,403,427
2072,360,393 2077,367,390`.split(/\s+/).map(q => q.split(',').map(Number));

const plot = document.getElementById('plot');

function add(name, attrs, text) {
    const el = document.createElementNS('http://www.w3.org/2000/svg', name);
    for (const key in attrs) el.setAttribute(key, attrs[key]);
    if (text) el.textContent = text;
    plot.appendChild(el);
}

// grid
let vertical = '';
let horizontal = '';
for (let x = 385; x < 2077; x += 32) vertical += `M${x + 0.5} 103V787`;
for (let i = 0; i < 21; i++) horizontal += `M353 ${Math.round(114 + i * 33.5) + 0.5}H2077`;
add('path', { class: 'grid', d: vertical, 'shape-rendering': 'crispEdges' });
add('path', { class: 'grid', d: horizontal, 'shape-rendering': 'crispEdges' });

// one bar a minute, filled in between the quotes
let seed = 7;
function random() {
    seed = (seed * 16807) % 2147483647;
    return seed / 2147483647;
}

const mids = [];
let bars = '';
let last = null;
for (let i = 0; i < quotes.length - 1; i++) {
    const [x0, h0, l0] = quotes[i];
    const [x1, h1, l1] = quotes[i + 1];
    for (let x = x0; x < x1; x++) {
        const t = (x - x0) / (x1 - x0);
        let high = h0 + (h1 - h0) * t;
        let low = l0 + (l1 - l0) * t;
        mids.push([x, (high + low) / 2]);
        if (t > 0) {
            const size = low - high;
            high += random() * size * 0.45;
            low -= random() * size * 0.45;
        }
        if (last) {
            high = Math.min(high, last[1]);
            low = Math.max(low, last[0]);
        }
        high = Math.round(high);
        low = Math.max(Math.round(low), high + 3);
        bars += `M${x + 0.5} ${high}V${low}`;
        last = [high, low];
    }
}

// moving average
const period = 18;
let average = '';
for (let i = 0; i < mids.length; i++) {
    const part = mids.slice(Math.max(0, i - period), i + 1);
    const y = part.reduce((sum, m) => sum + m[1], 0) / part.length;
    average += (i ? 'L' : 'M') + mids[i][0] + ' ' + y.toFixed(1);
}
add('path', { class: 'average', d: average });
add('path', { class: 'bars', d: bars, 'shape-rendering': 'crispEdges' });

// trades
add('path', { class: 'trade', d: 'M1162 303L1194 336M1208 314L1824 350' });
add('path', { d: 'M1159 296l3 3-3 4-3-4zM1205 310l3 4-3 4-3-4z', fill: '#f00', stroke: '#fff' });
add('path', { d: 'M1196 332l-3 4 3 4', fill: 'none', stroke: '#fff' });
add('rect', { x: 1824, y: 346, width: 2, height: 8, fill: '#f80', stroke: '#fff' });

// session lines
[560, 1996].forEach(x => {
    add('rect', { class: 'session', x: x - 1, y: 103, width: 3, height: 667 });
    add('path', { class: 'flag', d: `M${x + 0.5} 787V771.5h24l4 6-4 6h-24` });
    add('text', { class: 'flag-text', x: x + 2, y: 781 }, '12:30');
});

// shift marks
add('path', { d: 'M1725 103h9l-4.500 5zM353 780v7h7z', fill: '#778899' });
```
